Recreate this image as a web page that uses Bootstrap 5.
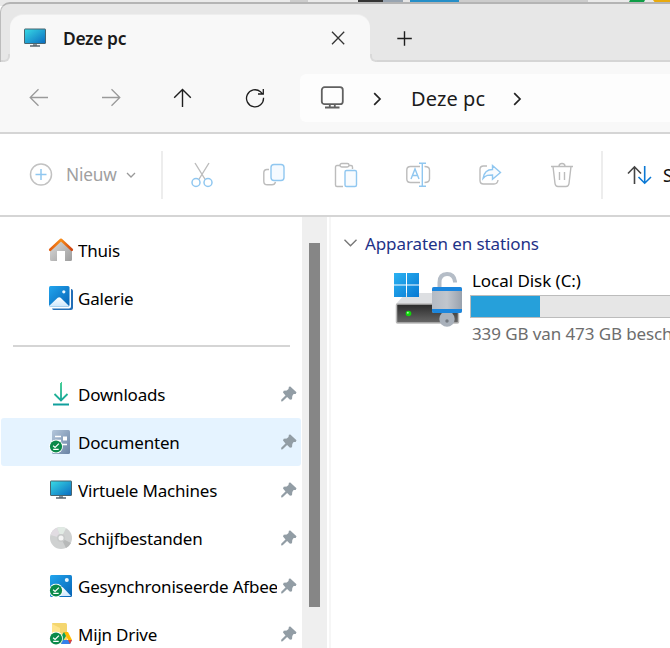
<!DOCTYPE html>
<html lang="nl">
<head>
<meta charset="utf-8">
<meta name="viewport" content="width=device-width, initial-scale=1">
<title>Deze pc</title>
<link href="https://cdn.jsdelivr.net/npm/bootstrap@5.3.0/dist/css/bootstrap.min.css" rel="stylesheet">
<style>
html,body{height:648px;overflow:hidden}
body{font-family:"Noto Sans","Open Sans",sans-serif;font-size:17px;letter-spacing:-.2px;line-height:24px;color:#000;background:#fff}
svg{display:block;flex:none;overflow:visible}
.explorer{width:670px;height:648px;overflow:hidden}
.backdrop{height:6px;background:#eaeaea}
.titlebar{height:60px;margin-top:-4px;background:#e7e7e7;border-top:2px solid #b4b4b4;border-left:1px solid #bcbcbc;border-top-left-radius:10px;box-shadow:inset 0 -2px #d5d5d5}
.tab-open{width:360px;height:47px;margin-left:9px;margin-top:11px;background:#f8f8f8;border-radius:13px 13px 0 0;padding-left:13px;padding-bottom:2px;position:relative;box-shadow:0 -1px 0 #eee}
.tab-open::before,.tab-open::after{content:"";position:absolute;bottom:0;width:7px;height:8px;border:2px solid #d9d9d9;border-top:0}
.tab-open::before{left:-7px;border-left:0;border-bottom-right-radius:6px;background:#e7e7e7;box-shadow:2px 2px 0 #f8f8f8}
.tab-open::after{right:-7px;border-right:0;border-bottom-left-radius:6px;background:#e7e7e7;box-shadow:-2px 2px 0 #f8f8f8}
.tab-label{font-size:17.4px;font-weight:600;letter-spacing:-.35px;margin-left:16px;color:#1b1b1b}
.tab-add{margin:26px 0 0 26px}
.navrow{height:72px;background:#f8f8f8;border-bottom:2px solid #d5d5d5;padding:12px 0 10px 3px}
.cell72{width:72px;height:48px;flex:none}
.address{margin-left:9px;height:48px;background:#fdfdfd;border-radius:6px 0 0 6px;padding-left:20px;color:#1b1b1b;font-size:20px;letter-spacing:.1px}
.address-text{margin-left:34px;padding-top:1px}
.commands{height:83px;border-bottom:2px solid #d5d5d5;color:#a0a0a0}
.commands span{flex:none;padding-top:1px}
.vline{width:2px;height:48px;background:#ededed;flex:none}
.sidebar{width:302px;padding-top:9px}
.side-item{height:48px;padding-left:48px;margin:0 1px 0 1px;border-radius:3px}
.side-item.chosen{background:#e5f3ff}
.side-text{width:199px;margin-left:5px;padding-top:2px;overflow:hidden;white-space:nowrap}
.sep{height:48px;padding:23px 12px 0 13px}
.sep div{height:2px;background:#d5d5d5}
.track{width:25px;background:#efefef;padding:26px 0 0 7px}
.thumb{width:11px;height:364px;background:#868686}
.pane{border-left:2px solid #f6f6f6;margin-left:2px;width:341px}
.group-title{color:#1e3287;letter-spacing:-.1px}
.disk-name{height:26px;line-height:23px;margin-left:2px;letter-spacing:-.05px}
.usage{height:23px;width:100%;background:#e6e6e6;border:1px solid #bcbcbc;border-right:0;border-radius:0}
.usage .progress-bar{background:#26a0da}
.free{color:#6d6d6d;white-space:nowrap;margin:4px 0 0 2px;letter-spacing:-.1px}
</style>
</head>
<body>
<svg width="0" height="0" class="position-absolute">
<defs>
<linearGradient id="gScreen" x1="0" y1="0" x2="1" y2="1"><stop stop-color="#38dbe5"/><stop offset="1" stop-color="#0a6ac0"/></linearGradient>
<linearGradient id="gBlue" x1="0" y1="0" x2="1" y2="1"><stop stop-color="#21a5ee"/><stop offset="1" stop-color="#0763b5"/></linearGradient>
<linearGradient id="gHill" x1="0" y1="0" x2="0" y2="1"><stop stop-color="#fff"/><stop offset="1" stop-color="#cfe8fc"/></linearGradient>
<linearGradient id="gHouse" x1="0" y1="0" x2="1" y2="1"><stop stop-color="#ddd"/><stop offset="1" stop-color="#9c9c9c"/></linearGradient>
<linearGradient id="gRoof" x1="0" x2="1" y1="0" y2="0"><stop stop-color="#e35e12"/><stop offset=".5" stop-color="#f88d18"/><stop offset="1" stop-color="#cf4310"/></linearGradient>
<linearGradient id="gDoc" x1="0" y1="0" x2="1" y2="1"><stop stop-color="#b3c6db"/><stop offset="1" stop-color="#6a83a4"/></linearGradient>
<linearGradient id="gDown" x1="0" y1="0" x2="0" y2="1"><stop stop-color="#33c98c"/><stop offset="1" stop-color="#119f9d"/></linearGradient>
<linearGradient id="gDrive" x1="0" y1="0" x2="0" y2="1"><stop stop-color="#292929"/><stop offset="1" stop-color="#686868"/></linearGradient>
<linearGradient id="gLock" x1="0" y1="0" x2="1" y2="0"><stop stop-color="#b3bac4"/><stop offset=".5" stop-color="#c1c6cd"/><stop offset="1" stop-color="#98a1ad"/></linearGradient>
<linearGradient id="gWin" x1="0" y1="0" x2="1" y2="1"><stop stop-color="#2bb2f2"/><stop offset="1" stop-color="#0879d3"/></linearGradient>
<symbol id="monitor" viewBox="0 0 24 20"><path d="M10 16h4v2h-4z" fill="#8b959b"/><path d="M7 18h10" stroke="#4d5a63" stroke-width="1.4"/><rect x="1.500" y="1" width="21" height="14.500" rx=".5" fill="url(#gScreen)" stroke="#49656f" stroke-width="1"/></symbol>
<symbol id="pin" viewBox="0 0 16 16"><path d="M9.3.4 L15.5 6.2 14.7 7.9 12.6 8.1 11.300 10 11 13.200 9 13.8 6.1 11 1.7 15.3 .2 15.4 .2 13.800 4.500 9.500 2 6.5 2.700 4.800 5.800 4.400 7.500 2.900 7.900 .8Z" fill="#929da5"/></symbol>
<symbol id="ok" viewBox="0 0 14 14"><circle cx="7" cy="7" r="6.900" fill="#fff"/><circle cx="7" cy="7" r="6.100" fill="#0b8a4a"/><path d="M4.1 6.200l2 1.800 3.800-3.800M4.200 9.900h5.500" fill="none" stroke="#fff" stroke-width="1.200"/></symbol>
</defs>
</svg>
<div class="explorer d-flex flex-column">
  <div class="backdrop flex-shrink-0"><svg width="670" height="4"><path d="M290 0h18v4h-18zM403 0h185v4H403z" fill="#ccc"/><path d="M358 0h25v4h-25z" fill="#353535"/><path d="M383 0h20v4h-20z" fill="#98a4b1"/><path d="M410 0h49v4h-49z" fill="#268fc8"/><path d="M403 0h7v4h-7z" fill="#e6e6e6"/><path d="M630 0h15l-2 4h-15z" fill="#0f9d47"/><path d="M653 0h17v4h-14z" fill="#e9aa0d"/></svg></div>
  <div class="titlebar d-flex flex-shrink-0 position-relative">
    <div class="tab-open d-flex align-items-center">
      <svg width="24" height="20"><use href="#monitor"/></svg>
      <span class="tab-label">Deze pc</span>
      <svg class="ms-auto me-4" width="16" height="14" viewBox="0 0 16 14"><path d="M2 .8l12.200 12.400M14.200.8L2 13.200" stroke="#333" stroke-width="1.300"/></svg>
    </div>
    <svg class="tab-add" width="16" height="16"><path d="M1.300 8.500h14.500M8.500 1.300v14.500" stroke="#1e1e1e" stroke-width="1.400"/></svg>
  </div>
  <div class="navrow d-flex flex-shrink-0">
    <div class="cell72 d-flex align-items-center justify-content-center"><svg width="20" height="20" fill="none" stroke="#9a9a9a" stroke-width="1.300"><path d="M19 9.500H1.500M9.500 1.200L1.200 9.500l8.300 8.300"/></svg></div>
    <div class="cell72 d-flex align-items-center justify-content-center"><svg width="20" height="20" fill="none" stroke="#9a9a9a" stroke-width="1.300"><path d="M1 9.500h17.500M10.500 1.200l8.300 8.300-8.300 8.300"/></svg></div>
    <div class="cell72 d-flex align-items-center justify-content-center"><svg width="20" height="20" fill="none" stroke="#1e1e1e" stroke-width="1.400"><path d="M9.500 19V1.500M1.200 9.700l8.300-8.300 8.300 8.300"/></svg></div>
    <div class="cell72 d-flex align-items-center justify-content-center"><svg width="20" height="20" fill="none" stroke="#1e1e1e" stroke-width="1.300"><path d="M18.500 9.800a8.500 8.500 0 1 1-3-6l2.300 2.300M18.300 1v5h-5.300"/></svg></div>
    <div class="address flex-grow-1 d-flex align-items-center">
      <svg width="25" height="24" viewBox="0 0 25 24" fill="none" stroke="#606060" stroke-width="1.800"><rect x="1.800" y="1.200" width="21" height="17" rx="2.800"/><path d="M9.800 18.500v3M14.800 18.500v3M5 21.500h14.500"/></svg>
      <svg width="8" height="14" class="ms-4" viewBox="0 0 8 14" fill="none" stroke="#222" stroke-width="1.700"><path d="M5.200 2.200L11 8l-5.800 5.800"/></svg>
      <span class="address-text">Deze pc</span>
      <svg width="8" height="14" class="ms-4" viewBox="0 0 8 14" fill="none" stroke="#222" stroke-width="1.700"><path d="M5.200 2.200L11 8l-5.800 5.800"/></svg>
    </div>
  </div>
  <div class="commands d-flex align-items-center flex-shrink-0">
    <svg width="24" height="24" style="margin-left:29px" fill="none"><circle cx="12" cy="11.500" r="10.500" stroke="#c2c2c2" stroke-width="1.500"/><path d="M6.500 11.500h11M12 6v11" stroke="#90c7f0" stroke-width="1.500"/></svg>
    <span style="margin-left:13px;width:60px;font-size:17.300px">Nieuw</span>
    <svg width="10" height="6" fill="none" stroke="#999" stroke-width="1.300"><path d="M1 1l4 4 4-4"/></svg>
    <div class="vline" style="margin-left:25px"></div>
    <div class="cell72 d-flex align-items-center justify-content-center" style="margin-left:3px"><svg width="24" height="26" fill="none" stroke="#bcbcbc" stroke-width="1.400"><path d="M5 1l10.500 17M19 1L8.500 18"/><g stroke="#90c7f0" stroke-width="1.500" fill="#fff"><circle cx="6" cy="20.500" r="4"/><circle cx="18" cy="20.500" r="4"/></g></svg></div>
    <div class="cell72 d-flex align-items-center justify-content-center"><svg width="24" height="24" fill="none" stroke="#bcbcbc" stroke-width="1.400"><path d="M7 6.500H5Q1.800 6.500 1.800 9.700v8.500q0 3.600 3.600 3.600H10q2.800 0 3.500-3"/><rect x="9" y="1.500" width="13" height="16" rx="3" stroke="#90c7f0" fill="#f5faff"/></svg></div>
    <div class="cell72 d-flex align-items-center justify-content-center"><svg width="24" height="26" fill="none" stroke="#bcbcbc" stroke-width="1.400"><path d="M6 3.500H3q-1.500 0-1.500 1.500v18q0 1.500 1.500 1.500h6M15 3.500h2q1.500 0 1.500 1.500v2"/><rect x="6" y="1.500" width="9" height="3.500" rx="1.700"/><rect x="11" y="8.500" width="11.500" height="16" rx="1.500" stroke="#90c7f0" fill="#f8fbfe"/></svg></div>
    <div class="cell72 d-flex align-items-center justify-content-center"><svg width="24" height="26" fill="none" stroke="#bcbcbc" stroke-width="1.400"><path d="M14 4.500H4.500Q.8 4.500.8 8v9q0 3.500 3.700 3.500H14M18.500 4.500q5 0 5 3.500v9q0 3.500-5 3.500"/><path d="M5 17l4-10 4 10M6.500 13.500h5M16.300 1.500v22M13 1.300h7M13 24.200h7" stroke="#90c7f0"/></svg></div>
    <div class="cell72 d-flex align-items-center justify-content-center"><svg width="24" height="24" fill="none" stroke="#bcbcbc" stroke-width="1.400"><path d="M9 3H5.500Q2 3 2 6.500v11Q2 21 5.500 21H16q3.500 0 4-4"/><path d="M5 15.500C6 9 9.500 6.500 14.500 6.500V2.500l8 7-8 6.700v-4.200c-4 0-6.500 0-9.500 3.500z" stroke="#90c7f0" fill="#f8fbfe"/></svg></div>
    <div class="cell72 d-flex align-items-center justify-content-center"><svg width="24" height="26" fill="none" stroke="#bcbcbc" stroke-width="1.400"><path d="M1 4.500h22M9 4.500q0-3 3-3t3 3M3 4.500l2 17q.4 3 3 3h8q2.600 0 3-3l2-17M9.500 10v8M14.500 10v8"/></svg></div>
    <div class="vline" style="margin-left:3px"></div>
    <svg width="26" height="20" style="margin-left:23px" fill="none" stroke-width="1.600"><path d="M8.500 19V1.800M2 8.500l6.500-6.700L15 8.500" stroke="#444"/><path d="M18.700 1v17.200M12.500 12l6.200 6.200L25 12" stroke="#0a78d4"/></svg>
    <span style="margin-left:11px;font-size:17.600px;color:#111">Sorteren</span>
  </div>
  <div class="d-flex flex-grow-1 overflow-hidden">
    <nav class="sidebar flex-shrink-0">
      <div class="side-item d-flex align-items-center">
        <svg width="24" height="24"><path d="M1 12L12 2l11 10v9.500q0 1.500-1.500 1.500H16V13H8v10H2.500Q1 23 1 21.500z" fill="url(#gHouse)"/><path d="M1.200 11.800L12 1.800l10.800 10" fill="none" stroke="url(#gRoof)" stroke-width="2.600" stroke-linecap="round" stroke-linejoin="round"/></svg>
        <span class="side-text">Thuis</span></div>
      <div class="side-item d-flex align-items-center">
        <svg width="24" height="24"><path d="M22 3h.5Q24 3.500 24 5v17q0 2-2 2H5q-1.500 0-2-1.500h17q2 0 2-2z" fill="#226eb7"/><rect width="20.500" height="20.500" rx="1.500" fill="url(#gBlue)"/><path d="M0 20L8.700 11.800q1.500-1.300 3 0L20 20q-.5.500-1.500.500h-17Q.500 20.500 0 20z" fill="url(#gHill)"/><circle cx="14.800" cy="5.800" r="1.600" fill="#e8f6ff"/></svg>
        <span class="side-text">Galerie</span></div>
      <div class="sep"><div></div></div>
      <div class="side-item d-flex align-items-center">
        <svg width="24" height="24"><path d="M12 1h.01V18M5.500 12l6.500 6.500 6.500-6.500M4 22.500h16" stroke="url(#gDown)" stroke-width="1.800" fill="none"/></svg>
        <span class="side-text">Downloads</span><svg width="16" height="16" class="ms-1"><use href="#pin"/></svg></div>
      <div class="side-item chosen d-flex align-items-center">
        <svg width="24" height="24"><rect x="3" width="18" height="24" rx="1.500" fill="url(#gDoc)"/><path d="M6 6.500h6M6 10.500h6M12 14.500h6" stroke="#fff" stroke-width="1.400"/><path d="M14 6.500h4v4h-4z" fill="#fff"/><use href="#ok" x="0" y="9.500" width="14" height="14"/></svg>
        <span class="side-text">Documenten</span><svg width="16" height="16" class="ms-1"><use href="#pin"/></svg></div>
      <div class="side-item d-flex align-items-center">
        <svg width="24" height="20"><use href="#monitor"/></svg>
        <span class="side-text">Virtuele Machines</span><svg width="16" height="16" class="ms-1"><use href="#pin"/></svg></div>
      <div class="side-item d-flex align-items-center">
        <svg width="24" height="24"><circle cx="12" cy="12" r="11" fill="#cfd1d1"/><path d="M12 12L1.500 9A11 11 0 0 1 8 1.700z" fill="#e1dce2"/><path d="M12 12L8 1.700a11 11 0 0 1 9 .5z" fill="#e1eae4"/><path d="M12 12l10 5a11 11 0 0 1-5 5z" fill="#b7b9b9"/><circle cx="12" cy="12" r="4" fill="#c7c9c9"/><circle cx="12" cy="12" r="2.500" fill="#f5f5f5"/></svg>
        <span class="side-text">Schijfbestanden</span><svg width="16" height="16" class="ms-1"><use href="#pin"/></svg></div>
      <div class="side-item d-flex align-items-center">
        <svg width="24" height="24"><rect x="1" y="1" width="22" height="22" rx="1.500" fill="url(#gBlue)"/><path d="M5 22l7-8.500q1-1 2 0L22 22z" fill="url(#gHill)"/><circle cx="17.800" cy="6" r="2" fill="#e8f6ff"/><use href="#ok" x="0" y="9.500" width="14" height="14"/></svg>
        <span class="side-text">Gesynchroniseerde Afbeeldingen</span><svg width="16" height="16" class="ms-1"><use href="#pin"/></svg></div>
      <div class="side-item d-flex align-items-center">
        <svg width="24" height="24"><path d="M3 1.500Q3 1 4 1h12.500q1.500 0 1.500 1.500V22H3z" fill="#f4d66f"/><path d="M3 2l8 4v16H3z" fill="#ffe48c"/><path d="M15 10h4l4 8h-4z" fill="#ffba00"/><path d="M15 10l2 4-5 8-2-4z" fill="#0b9d54"/><path d="M14 18h9l-2 4h-9z" fill="#3580ea"/><path d="M19 18h4l-2 4z" fill="#e44233"/><use href="#ok" x="0" y="9.500" width="14" height="14"/></svg>
        <span class="side-text">Mijn Drive</span><svg width="16" height="16" class="ms-1"><use href="#pin"/></svg></div>
    </nav>
    <div class="track flex-shrink-0"><div class="thumb"></div></div>
    <main class="pane flex-shrink-0 overflow-hidden">
      <div class="d-flex align-items-center" style="padding:15px 0 0 13px">
        <svg width="13" height="8" fill="none" stroke="#777" stroke-width="1.400" style="margin-top:-3px"><path d="M.5 .7l6 6 6-6"/></svg>
        <span class="group-title" style="margin-left:8px">Apparaten en stations</span>
      </div>
      <div class="d-flex" style="padding:13px 0 0 62px">
        <svg width="70" height="58"><path d="M13 24h42l12 11H3z" fill="#dddfe2"/><rect x="3.500" y="35" width="62" height="19" rx="1" fill="url(#gDrive)" stroke="#b9b9b9" stroke-width="1.500"/><circle cx="15.500" cy="44.500" r="2.800" fill="#12d60b"/><circle cx="14.800" cy="43.800" r="1" fill="#9affa0"/>
        <path d="M1 4h12v11.500H1zM14 4h12v11.500H14zM1 16.500h12V28H1zM14 16.500h12V28H14z" fill="url(#gWin)"/><path d="M46.500 20V13.500q0-8.500 7.500-8.500 7 0 8 7.500v1" fill="none" stroke="#b5bdc7" stroke-width="4"/><circle cx="54" cy="50" r="7.700" fill="#a9b1bb"/><circle cx="54" cy="52" r="1.700" fill="#737980"/><rect x="39" y="18" width="30" height="26" rx="2" fill="url(#gLock)"/><path d="M39 22v-2q0-2 2-2h26q2 0 2 2v2zM39 40h30v2q0 2-2 2H41q-2 0-2-2z" fill="#1b86dd"/></svg>
        <div class="flex-grow-1 overflow-hidden" style="margin-left:7px">
          <div class="disk-name">Local Disk (C:)</div>
          <div class="progress usage"><div class="progress-bar" style="width:34.800%"></div></div>
          <div class="free">339 GB van 473 GB beschikbaar</div>
        </div>
      </div>
    </main>
  </div>
</div>
<script src="https://cdn.jsdelivr.net/npm/bootstrap@5.3.0/dist/js/bootstrap.bundle.min.js"></script>
</body>
</html>
